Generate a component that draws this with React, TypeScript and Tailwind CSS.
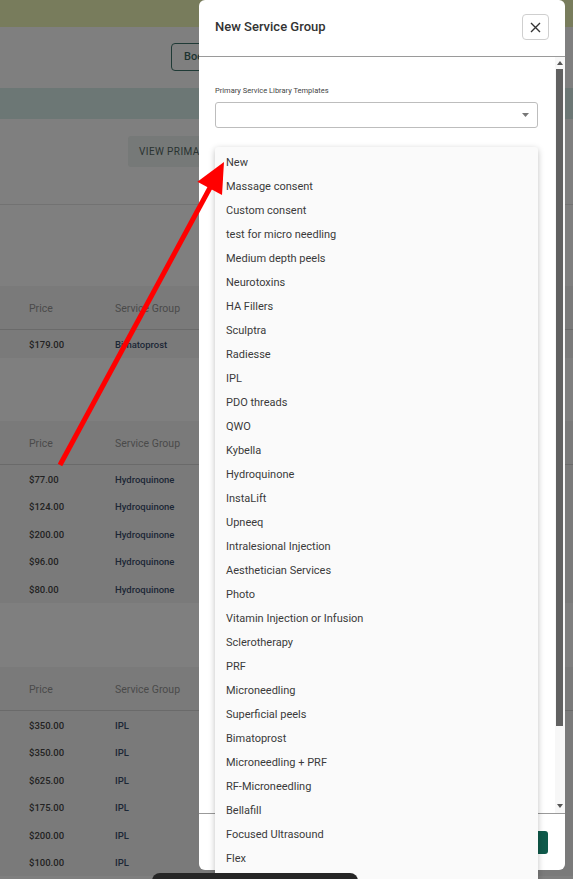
import React from "react";

const items = [
  "New",
  "Massage consent",
  "Custom consent",
  "test for micro needling",
  "Medium depth peels",
  "Neurotoxins",
  "HA Fillers",
  "Sculptra",
  "Radiesse",
  "IPL",
  "PDO threads",
  "QWO",
  "Kybella",
  "Hydroquinone",
  "InstaLift",
  "Upneeq",
  "Intralesional Injection",
  "Aesthetician Services",
  "Photo",
  "Vitamin Injection or Infusion",
  "Sclerotherapy",
  "PRF",
  "Microneedling",
  "Superficial peels",
  "Bimatoprost",
  "Microneedling + PRF",
  "RF-Microneedling",
  "Bellafill",
  "Focused Ultrasound",
  "Flex",
];

function Table({ rows }: { rows: [string, string][] }) {
  return (
    <div className="bg-[#7a7a7a]">
      <div className="flex h-[44px] items-center border-b border-[#6a6a6a] pl-[29px] pt-[2px] text-[10.5px] text-[#4a4a4a]">
        <div className="w-[86px]">Price</div>
        <div>Service Group</div>
      </div>
      {rows.map(([p, g], i) => (
        <div key={i} className="flex h-[27.5px] items-center pl-[29px] pt-[2px] text-[9.5px] font-medium">
          <div className="w-[86px] text-[#222]">{p}</div>
          <div className="text-[#1c2736]">{g}</div>
        </div>
      ))}
    </div>
  );
}

export default function App() {
  return (
    <div
      className="relative h-[879px] w-[573px] overflow-hidden bg-[#7f7f7f]"
      style={{ fontFamily: "Roboto, 'Noto Sans', sans-serif" }}
    >
      {/* Page (dimmed) */}
      <div className="h-[27px] bg-[#787c5c]" />
      <div className="h-[61px] pl-[171px] pt-[16px]">
        <div className="flex h-[28px] w-[80px] items-center rounded-[4px] border border-[#1f3a36] pl-[12px] text-[11px] font-medium text-[#1c3330]">
          Book
        </div>
      </div>
      <div className="h-[31px] bg-[#6c7775]" />
      <div className="h-[86px] border-b border-[#727272] pl-[128px] pt-[17px]">
        <div className="flex h-[31px] w-[120px] items-center rounded-[3px] bg-[#767978] pl-[11px] text-[10px] tracking-[0.4px] text-[#2a3331]">
          VIEW PRIMARY
        </div>
      </div>
      <div className="h-[81px]" />
      <Table rows={[["$179.00", "Bimatoprost"]]} />
      <div className="h-[63.5px]" />
      <Table
        rows={[
          ["$77.00", "Hydroquinone"],
          ["$124.00", "Hydroquinone"],
          ["$200.00", "Hydroquinone"],
          ["$96.00", "Hydroquinone"],
          ["$80.00", "Hydroquinone"],
        ]}
      />
      <div className="h-[64.5px]" />
      <Table
        rows={[
          ["$350.00", "IPL"],
          ["$350.00", "IPL"],
          ["$625.00", "IPL"],
          ["$175.00", "IPL"],
          ["$200.00", "IPL"],
          ["$100.00", "IPL"],
        ]}
      />

      {/* Modal */}
      <div className="absolute left-[199px] top-0 flex h-[870px] w-[366px] flex-col overflow-hidden rounded-[6px] bg-white">
        <div className="flex h-[57px] shrink-0 items-center justify-between border-b border-[#9a9a9a] pb-[2px] pl-[16px] pr-[16px]">
          <div className="text-[13px] font-medium text-[#333]">New Service Group</div>
          <div className="flex h-[26px] w-[27px] items-center justify-center rounded-[4px] border border-[#cfcfcf]">
            <svg width="11" height="11" viewBox="0 0 11 11">
              <path d="M1 1L10 10M10 1L1 10" stroke="#333" strokeWidth="1.4" />
            </svg>
          </div>
        </div>
        <div className="flex min-h-0 flex-1">
          <div className="flex-1 pl-[16px] pr-[17px] pt-[28px]">
            <div className="text-[7.5px] text-[#444]">Primary Service Library Templates</div>
            <div className="mt-[6px] flex h-[26px] items-center justify-end rounded-[3px] border border-[#bdbdbd] pr-[8px]">
              <svg width="7" height="4" viewBox="0 0 7 4">
                <path d="M0 0H7L3.5 4Z" fill="#777" />
              </svg>
            </div>
          </div>
          <div className="flex w-[10px] flex-col items-center bg-[#f7f7f7] pr-[1px]">
            <svg className="mt-[4px]" width="6" height="4" viewBox="0 0 6 4">
              <path d="M0 4H6L3 0Z" fill="#555" />
            </svg>
            <div className="mt-[4px] h-[657px] w-[7px] bg-[#616161]" />
            <div className="flex-1" />
            <svg className="mb-[5px]" width="6" height="4" viewBox="0 0 6 4">
              <path d="M0 0H6L3 4Z" fill="#555" />
            </svg>
          </div>
        </div>
        <div className="flex h-[57px] shrink-0 items-center justify-end border-t border-[#9a9a9a] pr-[17px]">
          <div className="h-[23px] w-[80px] rounded-[3px] bg-[#0f5a4b]" />
        </div>
      </div>

      {/* Dropdown list */}
      <div className="absolute left-[215px] top-[147px] h-[740px] w-[323px] rounded-[3px] bg-[#fafafa] pt-[4px] shadow-[0_2px_6px_rgba(0,0,0,0.25)]">
        {items.map((t) => (
          <div key={t} className="flex h-[24px] items-center pl-[11px] text-[11px] text-[#3a3a3a]">
            {t}
          </div>
        ))}
      </div>

      {/* Red arrow */}
      <svg className="pointer-events-none absolute left-0 top-0" width="573" height="879" viewBox="0 0 573 879">
        <line x1="60" y1="465" x2="212" y2="184" stroke="#ff0000" strokeWidth="5" />
        <path d="M224 162L222 195L197.4 181.7Z" fill="#ff0000" />
      </svg>

      {/* Bottom dark bar */}
      <div className="absolute left-[152px] top-[873px] h-[20px] w-[206px] rounded-t-[8px] bg-[#262626]" />
    </div>
  );
}
